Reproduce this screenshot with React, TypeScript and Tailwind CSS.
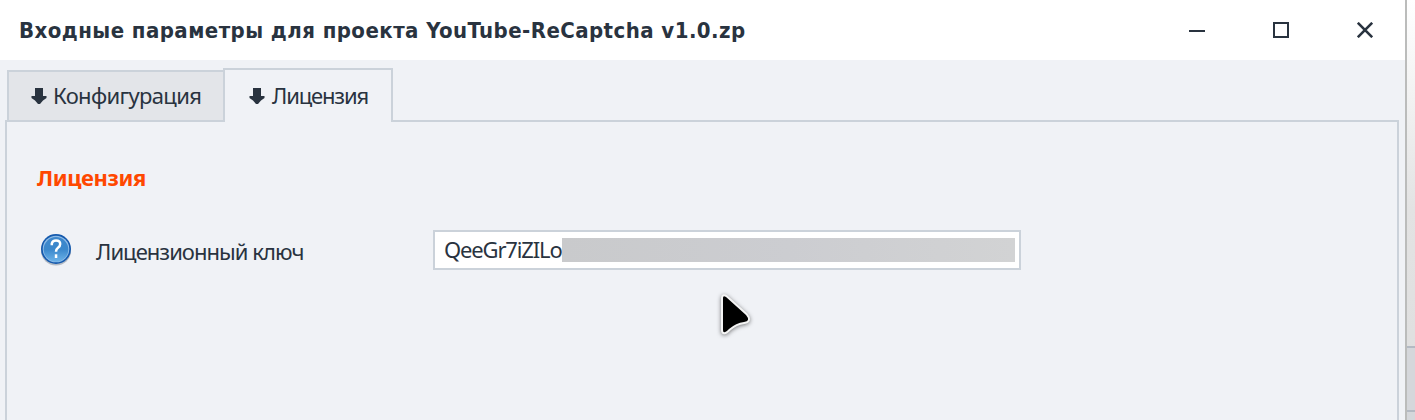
import React from "react";

function DownArrow() {
  return (
    <svg width="16" height="16" viewBox="0 0 16 16" className="shrink-0" fill="#29333f">
      <path d="M4 0h8v8h3.500v2L12 12.500 9 16H7l-3-3.500L.5 10V8H4z" />
    </svg>
  );
}

function TitleBar() {
  return (
    <header className="flex h-[60px] shrink-0 items-center bg-white pl-[19px]">
      <h1 className="mt-[2px] flex-1 font-['DejaVu_Sans_Condensed','DejaVu_Sans',sans-serif] text-[22px] leading-[30px] font-bold tracking-[0.44px] whitespace-nowrap [font-stretch:condensed]">
        Входные параметры для проекта YouTube-ReCaptcha v1.0.zp
      </h1>
      <div className="flex items-center gap-[68px] pr-[32px]">
        <button aria-label="Свернуть" className="flex h-4 w-4 items-center">
          <span className="mt-[2px] h-[2px] w-4 bg-[#29333f]" />
        </button>
        <button aria-label="Развернуть" className="h-4 w-4 border-2 border-[#29333f]" />
        <button aria-label="Закрыть" className="h-4 w-4">
          <svg width="16" height="16" viewBox="0 0 16 16" stroke="#29333f" strokeWidth="2.6">
            <path d="M.8.8 15.2 15.2M15.2.8.8 15.2" />
          </svg>
        </button>
      </div>
    </header>
  );
}

function HelpIcon() {
  return (
    <svg width="32" height="34" viewBox="0 0 32 34" className="shrink-0">
      <defs>
        <linearGradient id="help" x1="0" y1="0" x2="0" y2="1">
          <stop offset="0" stopColor="#3d87cc" />
          <stop offset=".5" stopColor="#3b88cc" />
          <stop offset="1" stopColor="#6cb2e8" />
        </linearGradient>
      </defs>
      <ellipse cx="16" cy="18" rx="15" ry="14.5" fill="#8c96a3" opacity=".6" />
      <circle cx="16" cy="16" r="15" fill="#1459ad" />
      <circle cx="16" cy="16" r="13.3" fill="#8dbbe6" />
      <circle cx="16" cy="16.4" r="12.3" fill="url(#help)" />
      <path d="M11.800 12.200V10.500Q12.500 7.400 16 7.400q4.200 0 4.200 3.600 0 2.200-2.200 3.800-2 1.500-2 4" fill="none" stroke="white" strokeWidth="2.5" />
      <path d="M14.800 21.300h2.500V25h-2.500z" fill="white" />
    </svg>
  );
}

export default function App() {
  return (
    <div className="flex h-[420px] w-[1415px] overflow-hidden bg-[#f0f2f6] font-['Noto_Sans',sans-serif] text-[#29333f]">
      <main className="relative flex w-[1405px] flex-col overflow-hidden">
        <TitleBar />
        <nav className="z-10 flex h-[62px] shrink-0 items-end pl-[7px] text-[22px]">
          <div className="flex h-[52px] w-[216px] items-center border-2 border-r-0 border-[#cbd2da] bg-[#e3e5e9] pl-[22px]">
            <DownArrow />
            <span className="-mt-[2px] ml-[6px] tracking-[-0.65px]">Конфигурация</span>
          </div>
          <div className="flex h-[54px] w-[170px] items-center border-2 border-b-0 border-[#cbd2da] bg-[#f0f2f6] pl-[24px]">
            <DownArrow />
            <span className="-mt-[2px] ml-[7px] tracking-[-1.15px]">Лицензия</span>
          </div>
        </nav>
        <section className="-mt-[2px] ml-[5px] h-[310px] w-[1394px] shrink-0 border-2 border-[#cbd2da] pl-[30px]">
          <h2 className="mt-[40px] text-[22px] leading-[30px] font-bold tracking-[-0.4px] text-[#ff4800]">Лицензия</h2>
          <div className="mt-[38px] flex h-10 items-center">
            <span className="ml-[3px]">
              <HelpIcon />
            </span>
            <label htmlFor="key" className="mt-[3px] ml-[24px] w-[337px] text-[22px] tracking-[-0.95px]">
              Лицензионный ключ
            </label>
            <div id="key" className="flex h-10 w-[588px] items-center border-2 border-[#cbd2da] bg-white pr-[4px] pl-[9px]">
              <span className="-mt-[2px] w-[118px] shrink-0 text-[22px] tracking-[-1.15px] whitespace-nowrap">QeeGr7iZILo</span>
              <span className="h-6 flex-1 bg-linear-to-r from-[#c9cacc] via-[#cccdd1] to-[#d2d3d4]" />
            </div>
          </div>
        </section>
        <svg className="absolute top-[290px] left-[714px]" width="44" height="50" viewBox="0 0 44 50">
          <path
            d="M9 8q0-3 3-1l20 18q5 6-2 7-8 1-15 7-6 6-6 1z"
            fill="#000"
            stroke="#f4f4f4"
            strokeWidth="4"
            strokeLinejoin="round"
            paintOrder="stroke"
            className="drop-shadow-[0_1px_2px_rgba(0,0,0,0.5)]"
          />
        </svg>
      </main>
      <aside className="flex w-[10px] flex-col border-l-2 border-[#bbbcbb] bg-linear-to-b from-white via-[#e3e3e3] to-[#dedede]">
        <div className="h-[346px]" />
        <div className="h-[66px] border-y-2 border-[#b4bac3] bg-[#d5d7db]" />
        <div className="flex-1 bg-[#d5d7db]" />
      </aside>
    </div>
  );
}
